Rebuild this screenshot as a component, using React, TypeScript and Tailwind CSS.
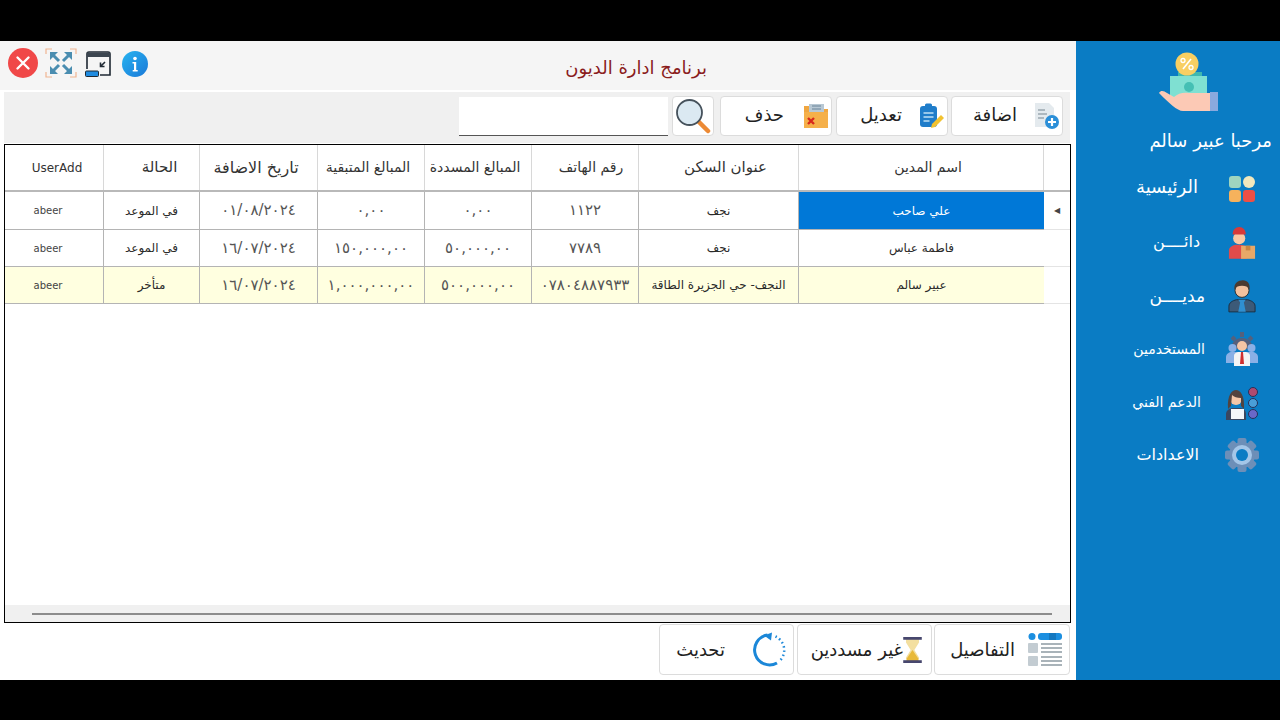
const font = "font-['DejaVu_Sans',sans-serif]";

const columns = [
  { label: 'UserAdd', cls: 'pl-[6px] text-[12px]', dir: 'ltr' as const },
  { label: 'الحالة', cls: 'pl-[16px] text-[15px]', dir: 'rtl' as const },
  { label: 'تاريخ الاضافة', cls: 'pr-[5px] text-[16px]', dir: 'rtl' as const },
  { label: 'المبالغ المتبقية', cls: 'pr-[6px] text-[14px]', dir: 'rtl' as const },
  { label: 'المبالغ المسددة', cls: 'pr-[6px] text-[14px]', dir: 'rtl' as const },
  { label: 'رقم الهاتف', cls: 'pl-[12px] text-[14px]', dir: 'rtl' as const },
  { label: 'عنوان السكن', cls: 'pl-[14px] text-[15px]', dir: 'rtl' as const },
  { label: 'اسم المدين', cls: 'pl-[14px] text-[14px]', dir: 'rtl' as const },
];

const rows = [
  ['abeer', 'في الموعد', '٠١/٠٨/٢٠٢٤', '٠,٠٠', '٠,٠٠', '١١٢٢', 'نجف', 'علي صاحب'],
  ['abeer', 'في الموعد', '١٦/٠٧/٢٠٢٤', '١٥٠,٠٠٠,٠٠', '٥٠,٠٠٠,٠٠', '٧٧٨٩', 'نجف', 'فاطمة عباس'],
  ['abeer', 'متأخر', '١٦/٠٧/٢٠٢٤', '١,٠٠٠,٠٠٠,٠٠', '٥٠٠,٠٠٠,٠٠', '٠٧٨٠٤٨٨٧٩٣٣', 'النجف- حي الجزيرة الطاقة', 'عبير سالم'],
];

function CloseIcon() {
  return (
    <svg width="30" height="30" viewBox="0 0 30 30">
      <circle cx="15" cy="15" r="15" fill="#f04848" />
      <path d="M9.500 9.500l11 11M20.500 9.500l-11 11" stroke="#fff" strokeWidth="2.400" strokeLinecap="round" />
    </svg>
  );
}

function ExpandIcon() {
  return (
    <svg width="32" height="30" viewBox="0 0 32 30" fill="none">
      <path d="M1 6V1h6M25 1h6v5M31 24v5h-6M7 29H1v-5" stroke="#f0b592" strokeWidth="1.200" />
      <path d="M8 7l6 6M24 7l-6 6M8 23l6-6M24 23l-6-6" stroke="#4a8db0" strokeWidth="3" />
      <path d="M5 4h8l-8 8zM27 4h-8l8 8zM5 26h8l-8-8zM27 26h-8l8-8z" fill="#4a8db0" />
    </svg>
  );
}

function WindowIcon() {
  return (
    <svg width="27" height="26" viewBox="0 0 27 26" fill="none">
      <path d="M2 18V3a2 2 0 0 1 2-2h19a2 2 0 0 1 2 2v21H15" stroke="#1f2933" strokeWidth="1.600" />
      <path d="M2 1.500h23V6H2z" fill="#3c4650" />
      <path d="M20 11l-4.500 4.500M15.500 11.500v4h4" stroke="#1f2933" strokeWidth="1.600" />
      <rect x="0.500" y="20" width="13" height="5.500" rx="1" fill="#1f8be0" stroke="#1f2933" />
    </svg>
  );
}

function InfoIcon() {
  return (
    <svg width="26" height="26" viewBox="0 0 26 26">
      <defs>
        <linearGradient id="info" x1="0" y1="0" x2="1" y2="1">
          <stop offset="0" stopColor="#27b4f0" />
          <stop offset="1" stopColor="#1a78d8" />
        </linearGradient>
      </defs>
      <circle cx="13" cy="13" r="13" fill="url(#info)" />
      <circle cx="13" cy="7.500" r="1.800" fill="#fff" />
      <path d="M10.500 11h3.700v8h1.500v1.500h-5V19h1.300v-6.500h-1.500z" fill="#fff" />
    </svg>
  );
}

function AddIcon() {
  return (
    <svg width="26" height="28" viewBox="0 0 26 28">
      <path d="M1 1h14l5 5v19H1z" fill="#e4eaee" />
      <path d="M4 8h7M4 12h9M4 16h6" stroke="#9aa8b0" strokeWidth="1.500" />
      <circle cx="18" cy="20" r="7" fill="#2b8fd8" />
      <path d="M18 16v8M14 20h8" stroke="#fff" strokeWidth="2.200" />
    </svg>
  );
}

function EditIcon() {
  return (
    <svg width="26" height="26" viewBox="0 0 26 26">
      <rect x="1" y="3" width="17" height="21" rx="3" fill="#1f7dca" />
      <rect x="6" y="0.500" width="7" height="5" rx="1.500" fill="#1f7dca" />
      <path d="M4.500 10h10M4.500 14h10M4.500 18h6" stroke="#bfe0f5" strokeWidth="1.500" />
      <path d="M12 25l1-4 9-9 3 3-9 9z" fill="#f2c230" />
    </svg>
  );
}

function DeleteIcon() {
  return (
    <svg width="26" height="26" viewBox="0 0 26 26">
      <path d="M1 3h9l2 3h13v19H1z" fill="#f0a640" />
      <path d="M6 1h15v9H6z" fill="#b8c8d4" />
      <path d="M9 3h9M9 6h9" stroke="#6a8498" strokeWidth="1" />
      <path d="M1 9h24v16H1z" fill="#f5b04a" />
      <path d="M5 15l6 6M11 15l-6 6" stroke="#d8281c" strokeWidth="2.400" />
    </svg>
  );
}

function SearchIcon() {
  return (
    <svg width="36" height="36" viewBox="0 0 36 36" fill="none">
      <path d="M23 23l10 10" stroke="#ec8a35" strokeWidth="4.500" strokeLinecap="round" />
      <circle cx="14.500" cy="14.500" r="12.500" fill="#dbe9f2" stroke="#46525c" strokeWidth="1.800" />
    </svg>
  );
}

function DetailsIcon() {
  return (
    <svg width="36" height="36" viewBox="0 0 36 36">
      <circle cx="5" cy="4.500" r="3.500" fill="#1c8fe0" />
      <rect x="11" y="1" width="24" height="7" rx="3" fill="#1c8fe0" />
      <rect x="22" y="1" width="7" height="7" fill="#1478c0" />
      <rect x="1" y="11" width="10" height="10" rx="1" fill="#c3ccd2" />
      <rect x="1" y="24" width="10" height="10" rx="1" fill="#c3ccd2" />
      <path d="M14 12h21M14 16h21M14 20h21M14 25h21M14 29h21M14 33h21" stroke="#8d9aa2" strokeWidth="1.600" />
    </svg>
  );
}

function HourglassIcon() {
  return (
    <svg width="19" height="26" viewBox="0 0 20 28">
      <path d="M3 2h14v4l-5 8 5 8v4H3v-4l5-8-5-8z" fill="#f3dfa0" />
      <path d="M10 14l6 9v3H4v-3z" fill="#e8b93a" />
      <rect x="0" y="0" width="20" height="3" fill="#47476e" />
      <rect x="0" y="25" width="20" height="3" fill="#47476e" />
    </svg>
  );
}

function RefreshIcon() {
  return (
    <svg width="36" height="36" viewBox="0 0 36 36" fill="none">
      <path d="M26 31A15 15 0 1 1 16.500 3.100" stroke="#1b87d8" strokeWidth="3" />
      <path d="M13 3.500L21 0.500 20 8.500z" fill="#1b87d8" />
      <path d="M24.500 4.500A15 15 0 0 1 28 29.500" stroke="#1b87d8" strokeWidth="2.500" strokeDasharray="1.500 2.800" />
    </svg>
  );
}

function LogoIcon() {
  return (
    <svg width="62" height="60" viewBox="0 0 62 60">
      <rect x="20" y="20" width="24" height="6" fill="#3fb8b0" />
      <rect x="12" y="24" width="37" height="22" fill="#7fe0d2" />
      <circle cx="31" cy="35" r="5" fill="#45bfb4" />
      <circle cx="29" cy="12" r="11.500" fill="#f8cf62" />
      <path d="M33 7L25 17" stroke="#fff" strokeWidth="1.600" />
      <circle cx="25" cy="8.500" r="2" fill="none" stroke="#fff" strokeWidth="1.300" />
      <circle cx="33" cy="15.500" r="2" fill="none" stroke="#fff" strokeWidth="1.300" />
      <path d="M1 41c2-3 5-2 8 0l7 4c4-4 10-5 15-4h21v18H25c-6 0-14-8-24-18z" fill="#fcc9b5" />
      <rect x="52" y="40" width="8" height="19" fill="#8aa9de" />
    </svg>
  );
}

function HomeIcon() {
  return (
    <svg className="mt-[3px]" width="28" height="28" viewBox="0 0 28 28">
      <rect x="1" y="1" width="12" height="12" rx="3" fill="#9ed5bf" />
      <circle cx="21" cy="7" r="6" fill="#f2e8bd" />
      <rect x="1" y="15" width="12" height="12" rx="3" fill="#f6b25c" />
      <rect x="15" y="15" width="12" height="12" rx="3" fill="#ee4f45" />
    </svg>
  );
}

function CreditorIcon() {
  return (
    <svg width="28" height="36" viewBox="0 0 30 36">
      <path d="M1 36V27c0-4 5-6 9-6h3c3 0 6 1 7 3v12z" fill="#e24b4b" />
      <circle cx="12" cy="14" r="6.500" fill="#fbc8a4" />
      <path d="M5 10c0-5 3-8 7-8s7 3 7 8z" fill="#d83a3a" />
      <rect x="14" y="22" width="15" height="14" fill="#e8a868" />
      <rect x="19" y="22" width="5" height="5" fill="#c98544" />
    </svg>
  );
}

function DebtorIcon() {
  return (
    <svg width="28" height="34" viewBox="0 0 30 36">
      <path d="M1 35v-6c0-4 4-6 8-7h12c4 1 8 3 8 7v6z" fill="#3c5a78" stroke="#1c2c3c" />
      <path d="M11 22h8l-2 3 2 10h-8l2-10z" fill="#2f8fd0" />
      <circle cx="15" cy="12" r="7.500" fill="#f3c19e" stroke="#2a2a2a" />
      <path d="M7 11c-1-7 4-10 9-10s8 4 7 10c-2-3-4-4-8-4s-6 1-8 4z" fill="#4a3a30" />
    </svg>
  );
}

function UsersIcon() {
  return (
    <svg width="32" height="34" viewBox="0 0 32 34">
      <path d="M5 17a11 11 0 1 1 22 0z" fill="#55607c" />
      <path d="M16 0v5M6 5l3 3M26 5l-3 3" stroke="#55607c" strokeWidth="4" />
      <circle cx="6.500" cy="16" r="4" fill="#8ab0e6" />
      <circle cx="25.500" cy="16" r="4" fill="#8ab0e6" />
      <path d="M0 31v-6c0-3 3-5 6-5h20c3 0 6 2 6 5v6z" fill="#8ab0e6" />
      <circle cx="16" cy="14" r="5" fill="#f5c5a5" />
      <path d="M8 34V24c0-3 3-4 5-4h6c2 0 5 1 5 4v10z" fill="#f4f4f4" />
      <path d="M15 20h2l1 12h-4z" fill="#cf3030" />
    </svg>
  );
}

function SupportIcon() {
  return (
    <svg className="mt-[4px]" width="34" height="34" viewBox="0 0 34 34">
      <path d="M1 33v-6c0-3 3-6 7-6h7c4 0 6 3 6 6v6z" fill="#3a4660" />
      <circle cx="11" cy="12" r="6" fill="#f3c6a8" />
      <path d="M3 22c-1-14 4-19 8-19s9 5 8 19l-3-3V11c-4 0-7-1-9-3l-1 11z" fill="#53433e" />
      <rect x="6" y="22" width="13" height="10" fill="#f4f6fa" />
      <circle cx="28" cy="5" r="4.500" fill="#b04a70" stroke="#27315a" />
      <circle cx="28" cy="16" r="4.500" fill="#4a9ed8" stroke="#27315a" />
      <circle cx="28" cy="27" r="4.500" fill="#6a68c8" stroke="#27315a" />
    </svg>
  );
}

function GearIcon() {
  const teeth = [0, 45, 90, 135];
  return (
    <svg width="34" height="34" viewBox="0 0 34 34">
      {teeth.map((a) => (
        <rect key={a} x="12.500" y="0" width="9" height="34" rx="2" fill="#6d8fb8" transform={`rotate(${a} 17 17)`} />
      ))}
      <circle cx="17" cy="17" r="13" fill="#6d8fb8" />
      <circle cx="17" cy="17" r="10" fill="#a4c6e8" />
      <circle cx="17" cy="17" r="6" fill="#0a7cc4" />
    </svg>
  );
}

function ToolButton({ label, icon, width, gap }: { label: string; icon: React.ReactNode; width: string; gap: string }) {
  return (
    <button className={`flex h-[40px] items-center justify-end rounded border border-[#dcdcdc] bg-white pr-[2px] text-[#222] ${width}`}>
      <span className={`pb-[3px] text-[18px] leading-none ${gap}`} dir="rtl">{label}</span>
      {icon}
    </button>
  );
}

function FootButton({ label, icon, width, gap, pad }: { label: string; icon: React.ReactNode; width: string; gap: string; pad: string }) {
  return (
    <button className={`flex h-[51px] items-center justify-end rounded border border-[#dcdcdc] bg-white text-[#222] ${width} ${pad}`}>
      <span className={`text-[18px] leading-none ${gap}`} dir="rtl">{label}</span>
      {icon}
    </button>
  );
}

function MenuItem({ label, icon, height, size, gap }: { label: string; icon: React.ReactNode; height: string; size: string; gap: string }) {
  return (
    <div className={`flex items-center justify-end ${height}`}>
      <span className={`leading-none text-white ${size}`} dir="rtl">{label}</span>
      <div className={`mr-[20px] flex w-[36px] justify-center ${gap}`}>{icon}</div>
    </div>
  );
}

export default function App() {
  return (
    <div className={`flex h-[720px] w-[1280px] flex-col overflow-hidden bg-black ${font}`}>
      <div className="h-[41px]" />
      <div className="flex h-[639px]">
        <main className="flex w-[1076px] flex-col bg-white">
          <div className="flex h-[49px] items-start bg-[#f5f5f5] pl-[8px] pt-[7px]">
            <CloseIcon />
            <div className="ml-[7px]"><ExpandIcon /></div>
            <div className="ml-[8px] mt-[3px]"><WindowIcon /></div>
            <div className="ml-[10px] mt-[3px]"><InfoIcon /></div>
            <h1 className="ml-auto mr-[369px] mt-[6px] text-[18px] font-normal text-[#8a1c1c]" dir="rtl">برنامج ادارة الديون</h1>
          </div>

          <div className="ml-[4px] mt-[2px] flex h-[51px] w-[1066px] items-start justify-end bg-[#f0f0f0] pr-[7px] pt-[4px]">
            <input className="mr-[4px] mt-[1px] h-[39px] w-[209px] border-b border-[#555] bg-white outline-none" />
            <button className="mr-[6px] flex h-[40px] w-[42px] items-center justify-center rounded border border-[#dcdcdc] bg-white">
              <SearchIcon />
            </button>
            <ToolButton label="حذف" icon={<DeleteIcon />} width="mr-[4px] w-[112px]" gap="mr-[19px]" />
            <ToolButton label="تعديل" icon={<EditIcon />} width="mr-[3px] w-[112px]" gap="mr-[17px]" />
            <ToolButton label="اضافة" icon={<AddIcon />} width="w-[112px]" gap="mr-[17px]" />
          </div>

          <div className="ml-[4px] mt-[1px] flex h-[479px] w-[1067px] flex-col border border-black bg-white">
            <div className="grid h-[47px] grid-cols-[99px_96px_118px_107px_107px_107px_160px_245px_26px] border-b-2 border-[#b9b9b9]">
              {columns.map((c) => (
                <div key={c.label} className={`flex items-center justify-center border-r border-[#d8d8d8] text-[#333] ${c.cls}`} dir={c.dir}>
                  {c.label}
                </div>
              ))}
              <div />
            </div>

            {rows.map((row, r) => (
              <div
                key={r}
                className={`grid grid-cols-[99px_96px_118px_107px_107px_107px_160px_245px_26px] text-[#2a2a2a] ${r === 0 ? 'h-[38px]' : 'h-[37px]'}`}
              >
                {row.map((cell, c) => {
                  const selected = r === 0 && c === 7;
                  const bg = selected ? 'bg-[#0078d7] text-white' : r === 2 ? 'bg-[#ffffe0]' : 'bg-white';
                  const numeric = c >= 2 && c <= 5;
                  const size = numeric ? 'text-[15px] tracking-[0.4px] text-[#555]' : c === 0 ? 'pr-[12px] text-[10px] text-[#444]' : 'text-[12px]';
                  const side = c === 7 ? 'border-r-0' : 'border-r';
                  return (
                    <div key={c} className={`flex items-center justify-center border-b border-[#b4b4b4] ${side} ${size} ${bg}`}>
                      <span dir={c === 0 || numeric ? 'ltr' : 'rtl'}>{cell}</span>
                    </div>
                  );
                })}
                <div className="flex items-center justify-center border-b border-[#e4e4e4] text-[8px] text-[#444]">{r === 0 ? '◀' : ''}</div>
              </div>
            ))}

            <div className="flex-1" />
            <div className="flex h-[17px] items-center bg-[#f0f0f0] pl-[27px]">
              <div className="h-[2px] w-[1020px] bg-[#8c8c8c]" />
            </div>
          </div>

          <div className="flex flex-1 items-start justify-end pr-[6px] pt-[1px]">
            <FootButton label="تحديث" icon={<RefreshIcon />} width="mr-[3px] w-[135px]" pad="pr-[6px]" gap="mr-[26px]" />
            <FootButton label="غير مسددين" icon={<HourglassIcon />} width="mr-[2px] w-[135px]" pad="pr-[9px]" gap="mr-0" />
            <FootButton label="التفاصيل" icon={<DetailsIcon />} width="w-[136px]" pad="pr-[6px]" gap="mr-[12px]" />
          </div>
        </main>

        <aside className="flex flex-1 flex-col bg-[#0a7cc4]">
          <div className="ml-[82px] mt-[11px]"><LogoIcon /></div>
          <div className="mr-[8px] mt-[20px] text-right text-[18px] leading-none text-white" dir="rtl">مرحبا عبير سالم</div>
          <div className="mt-[10px] flex flex-col">
            <MenuItem label="الرئيسية" icon={<HomeIcon />} height="h-[54px]" size="text-[18px]" gap="ml-[26px]" />
            <MenuItem label="دائــــن" icon={<CreditorIcon />} height="h-[55px]" size="text-[16px]" gap="ml-[24px]" />
            <MenuItem label="مديــــن" icon={<DebtorIcon />} height="h-[54px]" size="text-[17px]" gap="ml-[19px]" />
            <MenuItem label="المستخدمين" icon={<UsersIcon />} height="h-[52px]" size="text-[14px]" gap="ml-[19px]" />
            <MenuItem label="الدعم الفني" icon={<SupportIcon />} height="h-[53px]" size="text-[14px]" gap="ml-[23px]" />
            <MenuItem label="الاعدادات" icon={<GearIcon />} height="h-[53px]" size="text-[16px]" gap="ml-[25px]" />
          </div>
        </aside>
      </div>
      <div className="flex-1" />
    </div>
  );
}
